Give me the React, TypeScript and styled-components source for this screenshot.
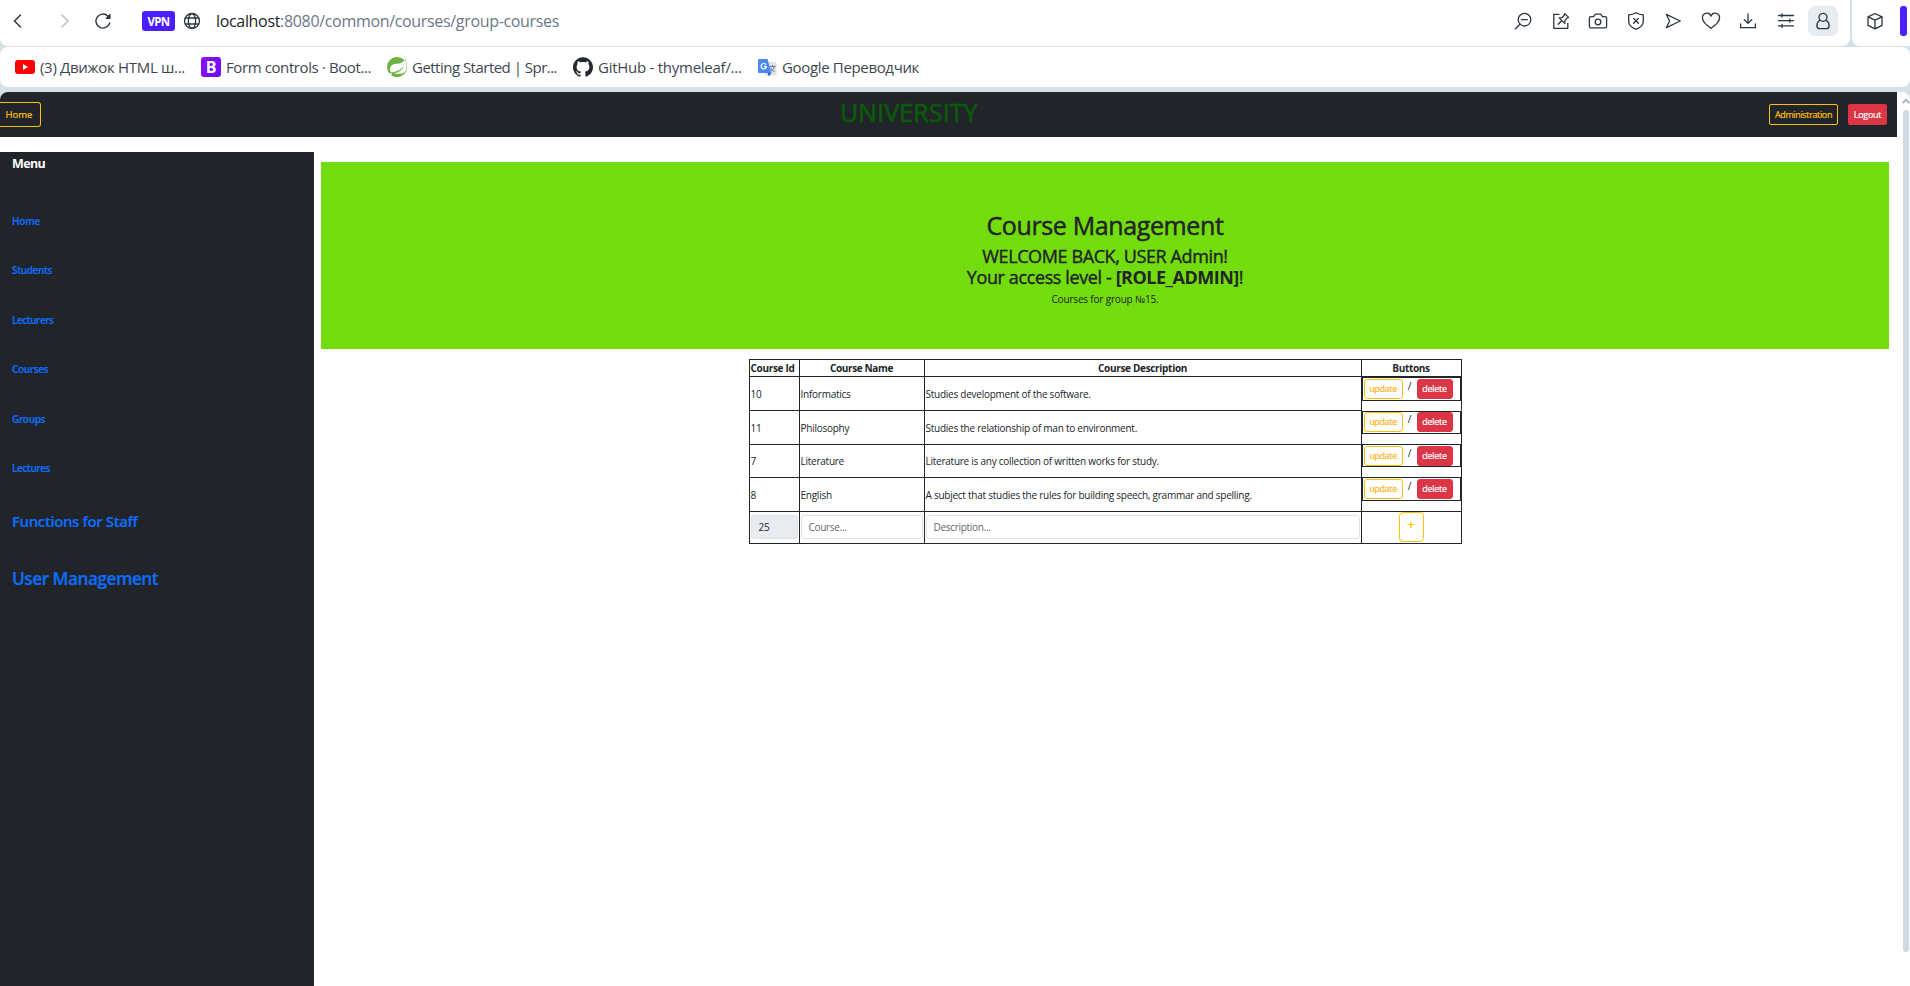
import React from 'react';
import styled, { createGlobalStyle, css } from 'styled-components';
import { SiSpring, SiGithub } from 'react-icons/si';

const GlobalStyle = createGlobalStyle`
  *, *::before, *::after { box-sizing: border-box; }
  html, body { margin: 0; padding: 0; overflow: hidden; }
  body {
    background: #fff;
    color: #212529;
    font-family: "Open Sans", "Noto Sans", sans-serif;
    font-size: 10px;
    white-space: nowrap;
  }
`;

const dark = '#212529';
const chrome = '#d6e0e8';
const amber = '#ffc107';
const red = '#dc3545';
const blue = '#0d6efd';

const Window = styled.div`
  width: 1910px;
  height: 986px;
  display: flex;
  flex-direction: column;
  background: ${chrome};
  overflow: hidden;
`;

/* ---------- browser chrome ---------- */

const ToolbarRow = styled.div`
  display: flex;
  gap: 2px;
  height: 46px;
  flex: none;
`;

const Toolbar = styled.div`
  width: 1850px;
  background: #fff;
  border-radius: 0 0 8px 8px;
  display: flex;
  align-items: flex-start;
  padding: 0 12px 0 9px;
`;

const SidePanelBar = styled.div`
  flex: 1;
  background: #fff;
  border-radius: 0 0 0 8px;
  display: flex;
  align-items: flex-start;
  padding: 6px 3px 0 13px;
  justify-content: space-between;
`;

const Accent = styled.div`
  width: 7px;
  height: 30px;
  border-radius: 3px;
  background: #4b1eff;
`;

const IconSlot = styled.span<{ $w?: number; $active?: boolean; $faded?: boolean }>`
  width: ${(p) => p.$w ?? 20}px;
  height: 30px;
  margin-top: 6px;
  display: flex;
  flex: none;
  align-items: center;
  justify-content: center;
  border-radius: 7px;
  color: ${(p) => (p.$faded ? '#b9bec4' : '#2b3640')};
  background: ${(p) => (p.$active ? '#e7ecf1' : 'transparent')};
  svg { flex: none; }
`;

const CubeSlot = styled(IconSlot)`
  margin-top: 0;
`;

const ReloadSlot = styled(IconSlot)`
  margin-left: -8px;
`;

const NavGroup = styled.div`
  display: flex;
  width: 133px;
  gap: 23px;
`;

const Vpn = styled.span`
  width: 33px;
  height: 20px;
  margin-top: 11px;
  border-radius: 3px;
  background: #4b1eff;
  color: #fff;
  font-size: 11.5px;
  font-weight: 700;
  line-height: 21px;
  letter-spacing: -0.6px;
  text-align: center;
`;

const GlobeSlot = styled(IconSlot)`
  margin-left: 7px;
`;

const Address = styled.div`
  margin: 11px 0 0 14px;
  font-size: 16px;
  line-height: 20px;
  letter-spacing: -0.328px;
  color: #6b7885;
  flex: 1;
`;

const Host = styled.span`
  color: #1a1d21;
`;

const ToolIcons = styled.div`
  display: flex;
  gap: 7.5px;
`;

const BookmarkBar = styled.div`
  height: 40px;
  margin: 1px 0 5px;
  flex: none;
  background: #fff;
  border-radius: 8px;
  display: flex;
  align-items: center;
  padding: 1px 0 0 15px;
`;

const Bookmark = styled.div<{ $w: number; $track: number }>`
  display: flex;
  align-items: center;
  gap: 5px;
  width: ${(p) => p.$w}px;
  font-size: 15px;
  line-height: 19px;
  padding-bottom: 1px;
  letter-spacing: ${(p) => p.$track}px;
  color: #3d4650;
  svg { flex: none; }
`;

const BootstrapBadge = styled.span`
  width: 20px;
  height: 20px;
  flex: none;
  border-radius: 3px;
  background: linear-gradient(135deg, #8a10f5, #6a0cfb);
  color: #fff;
  font: 700 16px/20px "Open Sans", sans-serif;
  letter-spacing: 0;
  text-align: center;
`;

/* ---------- page ---------- */

const Viewport = styled.div`
  flex: 1;
  display: flex;
  background: #fff;
  border-radius: 8px 8px 0 0;
  overflow: hidden;
`;

const Page = styled.div`
  width: 1897px;
  flex: none;
  display: flex;
  flex-direction: column;
`;

const ScrollTrack = styled.div`
  width: 13px;
  padding: 5px 0 34px 5px;
  display: flex;
  flex-direction: column;
  align-items: center;
  gap: 5px;
`;

const ScrollThumb = styled.div`
  width: 6px;
  flex: 1;
  border-radius: 3px;
  background: #cfdae3;
`;

const Navbar = styled.nav`
  height: 45px;
  flex: none;
  display: grid;
  grid-template-columns: 840px 1fr auto;
  align-items: center;
  padding-right: 10px;
  background: ${dark};
`;

const Brand = styled.div`
  color: #0b5a0b;
  font-size: 25px;
  line-height: 30px;
  padding-bottom: 5px;
  letter-spacing: 0.1px;
  -webkit-text-stroke: 0.7px #0b5a0b;
`;

const NavActions = styled.div`
  display: flex;
  gap: 10px;
`;

const NavButton = styled.button<{ $w: number; $solid?: boolean; $track: number }>`
  width: ${(p) => p.$w}px;
  height: 21px;
  padding: 0;
  border-radius: 2px;
  border: 1px solid ${(p) => (p.$solid ? red : amber)};
  background: ${(p) => (p.$solid ? red : 'transparent')};
  color: ${(p) => (p.$solid ? '#fff' : amber)};
  font: 400 9px/19px "Open Sans", sans-serif;
  letter-spacing: ${(p) => p.$track}px;
  -webkit-text-stroke: 0.2px currentColor;
`;

const HomeButton = styled(NavButton)`
  height: 25px;
  font-size: 9.5px;
  line-height: 23px;
  border-left: none;
  border-radius: 0 3px 3px 0;
  padding-right: 2px;
`;

const Body = styled.div`
  flex: 1;
  display: flex;
  padding-top: 15px;
`;

const Sidebar = styled.aside`
  width: 314px;
  background: ${dark};
  padding-left: 12px;
`;

const MenuTitle = styled.div`
  height: 24px;
  margin-bottom: 21px;
  color: #fff;
  font-size: 12.5px;
  font-weight: 700;
  line-height: 24px;
  letter-spacing: -0.6px;
`;

const MenuLink = styled.a<{ $size?: number; $h?: number; $track: number }>`
  display: block;
  height: ${(p) => p.$h ?? 49.4}px;
  line-height: ${(p) => p.$h ?? 49.4}px;
  color: ${blue};
  font-size: ${(p) => p.$size ?? 10}px;
  font-weight: 600;
  letter-spacing: ${(p) => p.$track}px;
  -webkit-text-stroke: 0.2px ${blue};
`;

const Content = styled.main`
  width: 1568px;
  margin: 10px 0 0 7px;
  display: flex;
  flex-direction: column;
  align-items: center;
`;

const Banner = styled.header`
  width: 100%;
  height: 187px;
  padding-top: 48px;
  background: #73dc0c;
  text-align: center;
`;

const Title = styled.h1`
  margin: 0 0 5px;
  font-size: 25px;
  font-weight: 400;
  line-height: 31px;
  letter-spacing: -0.378px;
  -webkit-text-stroke: 0.5px ${dark};
`;

const Greeting = styled.div`
  font-size: 18px;
  line-height: 21px;
  letter-spacing: -0.39px;
  -webkit-text-stroke: 0.4px ${dark};
  b { letter-spacing: -0.5px; -webkit-text-stroke: 0; }
`;

const Note = styled.div`
  margin-top: 4px;
  line-height: 15px;
  letter-spacing: -0.18px;
`;

const Table = styled.div`
  width: 713px;
  margin-top: 10px;
  border: 1px solid ${dark};
  border-width: 1px 0 0 1px;
`;

const Row = styled.div<{ $h: number }>`
  display: grid;
  grid-template-columns: 50px 125px 437px 100px;
  height: ${(p) => p.$h}px;
`;

const Cell = styled.div<{ $track?: number; $open?: boolean }>`
  min-width: 0;
  display: flex;
  align-items: center;
  padding: 0 0 0 1px;
  letter-spacing: ${(p) => p.$track ?? -0.25}px;
  border-right: 1px solid ${dark};
  border-bottom: 1px solid ${(p) => (p.$open ? 'transparent' : dark)};
`;

const HeadCell = styled(Cell)<{ $start?: boolean }>`
  justify-content: ${(p) => (p.$start ? 'flex-start' : 'center')};
  padding: 0 0 1px ${(p) => (p.$start ? 1 : 0)}px;
  font-weight: 700;
`;

const ActionCell = styled(Cell)`
  align-items: flex-start;
  padding: 0;
`;

const ActionBox = styled.div<{ $h: number; $lift: number; $top: number }>`
  width: 99px;
  height: ${(p) => p.$h}px;
  margin-top: ${(p) => -p.$lift}px;
  padding: ${(p) => p.$top - 1}px 0 0 1px;
  border: 1px solid ${dark};
  display: flex;
  flex: none;
  align-items: flex-start;
`;

const rowButton = css`
  height: 20px;
  padding: 0 0 1px;
  border-radius: 3px;
  font: 400 9px/16px "Open Sans", sans-serif;
`;

const UpdateButton = styled.button`
  ${rowButton}
  width: 39px;
  border: 1px solid ${amber};
  background: #fff;
  color: #ffb31a;
  letter-spacing: -0.35px;
  -webkit-text-stroke: 0.2px #ffb31a;
`;

const DeleteButton = styled.button`
  ${rowButton}
  width: 36px;
  border: 1px solid ${red};
  background: ${red};
  color: #fff;
  letter-spacing: -0.3px;
  -webkit-text-stroke: 0.2px #fff;
`;

const Slash = styled.span`
  width: 14px;
  text-align: center;
  line-height: 15px;
`;

const FieldCell = styled(Cell)`
  align-items: flex-start;
  padding: 3px 1px 0 1px;
`;

const Field = styled.div<{ $disabled?: boolean }>`
  width: 100%;
  height: 24px;
  padding-left: 7px;
  border: 1px solid #dee2e6;
  border-radius: 3px;
  background: ${(p) => (p.$disabled ? '#e9ecef' : '#fff')};
  color: ${(p) => (p.$disabled ? dark : '#5f676e')};
  line-height: 23px;
  letter-spacing: -0.3px;
`;

const AddCell = styled(Cell)`
  justify-content: center;
  align-items: flex-start;
  padding: 0;
`;

const AddButton = styled.button`
  width: 25px;
  height: 30px;
  padding: 0 0 6px;
  border: 1px solid ${amber};
  border-radius: 4px;
  background: #fff;
  color: ${amber};
  font: 400 13px/22px "Open Sans", sans-serif;
  -webkit-text-stroke: 0.3px ${amber};
`;

/* ---------- icons ---------- */

const Glyph = ({ size = 20, sw = 1.3, children }: { size?: number; sw?: number; children: React.ReactNode }) => (
  <svg width={size} height={size} viewBox="0 0 20 20" fill="none" stroke="currentColor" strokeWidth={sw} strokeLinecap="round" strokeLinejoin="round">
    {children}
  </svg>
);

const BackIcon = () => <Glyph sw={1.5}><path d="M12.500 4 6.500 10l6 6" /></Glyph>;
const ForwardIcon = () => <Glyph sw={1.5}><path d="m8 4 6 6-6 6" /></Glyph>;
const ReloadIcon = () => (
  <Glyph sw={1.4}>
    <path d="M16.7 12A7 7 0 1 1 15 5.200L16.200 6.500" />
    <path d="M16.900 3.800v3.400h-3.400z" fill="currentColor" />
  </Glyph>
);
const GlobeIcon = () => (
  <Glyph>
    <circle cx="10" cy="10" r="7.5" />
    <ellipse cx="10" cy="10" rx="3.6" ry="7.5" />
    <path d="M3.3 7h13.4M3.3 13h13.4" />
  </Glyph>
);
const ZoomOutIcon = () => <Glyph><circle cx="11.5" cy="8.7" r="6.3" /><path d="M8.7 8.7h5.6M7 13.3l-4.6 4.4" /></Glyph>;
const EditIcon = () => (
  <Glyph>
    <path d="M8 3.300H2.800v14h14v-5" />
    <path d="M13.800 2.600l3.800 3.800-1.300.5-2.400 2.800-.2 2.700-5.500-5.500 2.700-.2 2.400-2.500zM10.600 9.700l-3.400 3.500" />
  </Glyph>
);
const CameraIcon = () => (
  <Glyph>
    <path d="M3 5.7h2.6L7.4 3.2h5.2l1.8 2.5H17a1.6 1.6 0 0 1 1.6 1.6v8a1.6 1.6 0 0 1-1.6 1.6H3a1.6 1.6 0 0 1-1.6-1.6v-8A1.6 1.6 0 0 1 3 5.7z" />
    <circle cx="10" cy="11" r="2.8" />
  </Glyph>
);
const ShieldIcon = () => (
  <Glyph>
    <path d="M10 1.800c2.400 1.500 4.600 2 7.300 2.100v6.300c0 4-3 6.500-7.300 8.100-4.300-1.600-7.300-4.100-7.300-8.100V3.900C5.400 3.800 7.600 3.300 10 1.800z" />
    <path d="m7.600 7.400 4.800 4.800M12.400 7.400l-4.800 4.800" />
  </Glyph>
);
const SendIcon = () => <Glyph><path d="M3.300 3.300 17.300 10 3.300 16.700 6.600 10z" /></Glyph>;
const HeartIcon = () => (
  <Glyph><path d="M10 17.300C5.500 14.200 1.500 11 1.500 7.300A4.400 4.400 0 0 1 10 5.200a4.400 4.400 0 0 1 8.500 2.100c0 3.700-4 6.900-8.500 10z" /></Glyph>
);
const DownloadIcon = () => <Glyph><path d="M10 2.800v9.400M6.300 8.700l3.700 3.700 3.700-3.700M2.600 13v3.700h14.800V13" /></Glyph>;
const SlidersIcon = () => <Glyph><path d="M2.500 4.500h15M2.500 9.700h15M2.500 14.900h15M6 3v3M13.800 8.200v3M6 13.400v3" /></Glyph>;
const PersonIcon = () => (
  <Glyph>
    <circle cx="10" cy="6.300" r="4" />
    <path d="M6.800 9.200c-2 1.300-2.900 3.300-2.900 5.700 0 2 1.200 2.800 3 2.800h6.200c1.800 0 3-.8 3-2.800 0-2.400-.9-4.400-2.900-5.700" />
  </Glyph>
);
const CubeIcon = () => <Glyph><path d="M10 2.500l7 3.300v8.600l-7 3.400-7-3.400V5.800zM3 5.800l7 3.400 7-3.400M10 9.200v8.600" /></Glyph>;

const YoutubeIcon = () => (
  <svg width="20" height="14" viewBox="0 0 20 14">
    <rect width="20" height="14" rx="3" fill="#f00" />
    <path d="M8 4v6l5-3z" fill="#fff" />
  </svg>
);
const TranslateIcon = () => (
  <svg width="19" height="19" viewBox="0 0 19 19">
    <rect x="7" y="4" width="11.500" height="13.500" rx="1" fill="#dfe1e4" />
    <path d="M11.500 8.500h6M14.500 7v1.500M16.400 8.500c-.6 2.400-2 4-4 5M12.700 9.800c.8 1.800 2.200 3 4 3.800" stroke="#6c7a86" strokeWidth="1" fill="none" />
    <path d="M9.500 14.500h4l-2.500 4z" fill="#2f55d4" />
    <path d="M1 1h8.500l4 14H1a1 1 0 0 1-1-1V2a1 1 0 0 1 1-1z" fill="#4a8af4" />
    <path d="M8 6.600a2.700 2.700 0 1 0 .5 2H6" stroke="#fff" strokeWidth="1.200" fill="none" />
  </svg>
);
const ScrollArrow = () => (
  <svg width="8" height="8" viewBox="0 0 8 8" fill="none" stroke="#a9b0b6" strokeWidth="1.800"><path d="M.8 6 4 2.700 7.200 6" /></svg>
);

/* ---------- data ---------- */

const menu: [string, number][] = [
  ['Home', -0.23], ['Students', -0.37], ['Lecturers', -0.47], ['Courses', -0.37], ['Groups', -0.35], ['Lectures', -0.43],
];

const courses = [
  { id: '10', name: 'Informatics', text: 'Studies development of the software.', h: 34, boxH: 24, lift: 0, top: 2, open: true },
  { id: '11', name: 'Philosophy', text: 'Studies the relationship of man to environment.', h: 34, boxH: 23, lift: 0, top: 1, open: false },
  { id: '7', name: 'Literature', text: 'Literature is any collection of written works for study.', h: 33, boxH: 23, lift: 1, top: 2, open: false },
  { id: '8', name: 'English', text: 'A subject that studies the rules for building speech, grammar and spelling.', h: 34, boxH: 24, lift: 1, top: 2, open: false },
];

export default function App() {
  return (
    <Window>
      <GlobalStyle />
      <ToolbarRow>
        <Toolbar>
          <NavGroup>
            <IconSlot $w={18}><BackIcon /></IconSlot>
            <IconSlot $w={28} $faded><ForwardIcon /></IconSlot>
            <ReloadSlot><ReloadIcon /></ReloadSlot>
          </NavGroup>
          <Vpn>VPN</Vpn>
          <GlobeSlot><GlobeIcon /></GlobeSlot>
          <Address><Host>localhost</Host>:8080/common/courses/group-courses</Address>
          <ToolIcons>
            <IconSlot $w={30}><ZoomOutIcon /></IconSlot>
            <IconSlot $w={30}><EditIcon /></IconSlot>
            <IconSlot $w={30}><CameraIcon /></IconSlot>
            <IconSlot $w={30}><ShieldIcon /></IconSlot>
            <IconSlot $w={30}><SendIcon /></IconSlot>
            <IconSlot $w={30}><HeartIcon /></IconSlot>
            <IconSlot $w={30}><DownloadIcon /></IconSlot>
            <IconSlot $w={30}><SlidersIcon /></IconSlot>
            <IconSlot $w={30} $active><PersonIcon /></IconSlot>
          </ToolIcons>
        </Toolbar>
        <SidePanelBar>
          <CubeSlot><CubeIcon /></CubeSlot>
          <Accent />
        </SidePanelBar>
      </ToolbarRow>

      <BookmarkBar>
        <Bookmark $w={186} $track={-0.306}><YoutubeIcon />(3) Движок HTML ш...</Bookmark>
        <Bookmark $w={186} $track={-0.398}><BootstrapBadge>B</BootstrapBadge>Form controls · Boot...</Bookmark>
        <Bookmark $w={186} $track={-0.517}><SiSpring size={20} color="#6db33f" />Getting Started | Spr...</Bookmark>
        <Bookmark $w={185} $track={-0.26}><SiGithub size={20} color="#24292f" />GitHub - thymeleaf/...</Bookmark>
        <Bookmark $w={186} $track={-0.341}><TranslateIcon />Google Переводчик</Bookmark>
      </BookmarkBar>

      <Viewport>
        <Page>
          <Navbar>
            <HomeButton $w={41} $track={0}>Home</HomeButton>
            <Brand>UNIVERSITY</Brand>
            <NavActions>
              <NavButton $w={69} $track={-0.36}>Administration</NavButton>
              <NavButton $w={39} $track={-0.3} $solid>Logout</NavButton>
            </NavActions>
          </Navbar>
          <Body>
            <Sidebar>
              <MenuTitle>Menu</MenuTitle>
              {menu.map(([label, track]) => (
                <MenuLink key={label} $track={track}>{label}</MenuLink>
              ))}
              <MenuLink $size={15} $h={57} $track={-0.4}>Functions for Staff</MenuLink>
              <MenuLink $size={17.3} $h={57} $track={-0.52}>User Management</MenuLink>
            </Sidebar>
            <Content>
              <Banner>
                <Title>Course Management</Title>
                <Greeting>WELCOME BACK, USER Admin!</Greeting>
                <Greeting>Your access level - <b>[ROLE_ADMIN]</b>!</Greeting>
                <Note>Courses for group №15.</Note>
              </Banner>
              <Table>
                <Row $h={17}>
                  <HeadCell $track={-0.31} $start>Course Id</HeadCell>
                  <HeadCell $track={-0.37}>Course Name</HeadCell>
                  <HeadCell $track={-0.31}>Course Description</HeadCell>
                  <HeadCell $track={-0.35}>Buttons</HeadCell>
                </Row>
                {courses.map((c) => (
                  <Row key={c.id} $h={c.h}>
                    <Cell>{c.id}</Cell>
                    <Cell>{c.name}</Cell>
                    <Cell>{c.text}</Cell>
                    <ActionCell $open={c.open}>
                      <ActionBox $h={c.boxH} $lift={c.lift} $top={c.top}>
                        <UpdateButton>update</UpdateButton>
                        <Slash>/</Slash>
                        <DeleteButton>delete</DeleteButton>
                      </ActionBox>
                    </ActionCell>
                  </Row>
                ))}
                <Row $h={32}>
                  <FieldCell><Field $disabled>25</Field></FieldCell>
                  <FieldCell><Field>Course...</Field></FieldCell>
                  <FieldCell><Field>Description...</Field></FieldCell>
                  <AddCell><AddButton>+</AddButton></AddCell>
                </Row>
              </Table>
            </Content>
          </Body>
        </Page>
        <ScrollTrack>
          <ScrollArrow />
          <ScrollThumb />
        </ScrollTrack>
      </Viewport>
    </Window>
  );
}
